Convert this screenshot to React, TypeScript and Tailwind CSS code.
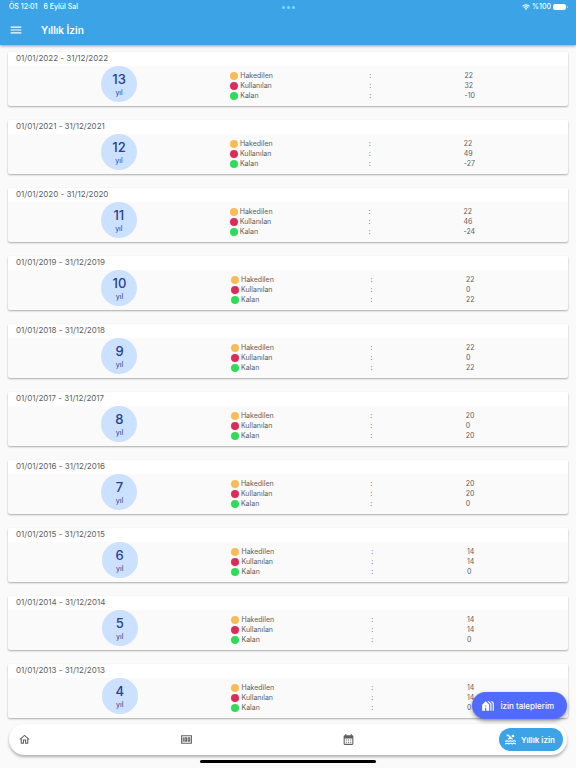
import React from "react";
import {
  MdCalendarMonth,
  MdHolidayVillage,
  MdMenu,
  MdMoney,
  MdOutlineHome,
  MdPool,
} from "react-icons/md";

type LeaveYear = {
  year: number;
  seniority: number;
  earned: number;
  used: number;
  remaining: number;
};

const leaveYears: LeaveYear[] = [
  { year: 2022, seniority: 13, earned: 22, used: 32, remaining: -10 },
  { year: 2021, seniority: 12, earned: 22, used: 49, remaining: -27 },
  { year: 2020, seniority: 11, earned: 22, used: 46, remaining: -24 },
  { year: 2019, seniority: 10, earned: 22, used: 0, remaining: 22 },
  { year: 2018, seniority: 9, earned: 22, used: 0, remaining: 22 },
  { year: 2017, seniority: 8, earned: 20, used: 0, remaining: 20 },
  { year: 2016, seniority: 7, earned: 20, used: 20, remaining: 0 },
  { year: 2015, seniority: 6, earned: 14, used: 14, remaining: 0 },
  { year: 2014, seniority: 5, earned: 14, used: 14, remaining: 0 },
  { year: 2013, seniority: 4, earned: 14, used: 14, remaining: 0 },
];

const legend = [
  { label: "Hakedilen", dot: "bg-[#f8bb55]" },
  { label: "Kullanılan", dot: "bg-[#de2c58]" },
  { label: "Kalan", dot: "bg-[#2edc59]" },
];

function WifiIcon() {
  return (
    <svg viewBox="0 0 16 12" className="h-[6px] w-2" aria-hidden="true">
      <g fill="none" stroke="currentColor" strokeWidth="2.2">
        <path d="M1 4.6a10 10 0 0 1 14 0" />
        <path d="M3.6 7.4a6.2 6.2 0 0 1 8.8 0" />
      </g>
      <path fill="currentColor" d="M5.6 9.3a3.4 3.4 0 0 1 4.8 0L8 12z" />
    </svg>
  );
}

function StatusBar() {
  return (
    <div className="flex h-[14px] items-center justify-between pl-[9px] pr-2 text-[7px] font-medium">
      <div className="flex flex-1 gap-[6px]">
        <span>ÖS 12:01</span>
        <span>6 Eylül Sal</span>
      </div>
      <div className="flex gap-[2px]">
        <span className="size-[3px] rounded-full bg-[#7fdcff]" />
        <span className="size-[3px] rounded-full bg-[#7fdcff]" />
        <span className="size-[3px] rounded-full bg-[#7fdcff]" />
      </div>
      <div className="flex flex-1 items-center justify-end gap-[2px]">
        <WifiIcon />
        <span>%100</span>
        <span className="flex items-center gap-px">
          <span className="h-[6px] w-[13px] rounded-[2px] border border-white/50 bg-white" />
          <span className="h-[2px] w-px bg-white/50" />
        </span>
      </div>
    </div>
  );
}

function LeaveCard({ item }: { item: LeaveYear }) {
  return (
    <article className="rounded-[2px] bg-[#fafafa] shadow-[0_1px_2px_rgba(0,0,0,0.32)]">
      <h2 className="h-[14px] rounded-t-[2px] bg-white pl-2 text-[8px] leading-[12px] text-[#606060]">
        01/01/{item.year} - 31/12/{item.year}
      </h2>
      <div className="flex h-10 items-center justify-evenly text-[7px] leading-[10px] text-[#606060]">
        <div className="flex size-9 flex-col items-center self-start rounded-full bg-[#cce0ff] pt-[5px] text-[#27408f]">
          <span className="text-[13px] font-medium leading-[16px]">
            {item.seniority}
          </span>
          <span className="leading-[12px]">yıl</span>
        </div>
        <ul className="w-[46px]">
          {legend.map(({ label, dot }) => (
            <li key={label} className="flex items-center gap-[2px]">
              <span className={`size-2 shrink-0 rounded-full ${dot}`} />
              {label}
            </li>
          ))}
        </ul>
        <ul>
          {legend.map(({ label }) => (
            <li key={label}>:</li>
          ))}
        </ul>
        <ul>
          <li>{item.earned}</li>
          <li>{item.used}</li>
          <li>{item.remaining}</li>
        </ul>
      </div>
    </article>
  );
}

export default function App() {
  return (
    <div className="flex min-h-screen flex-col bg-[#fafafa] font-['Inter','Open_Sans',sans-serif]">
      <header className="h-[45px] bg-[#3ba3e6] text-white shadow-[0_1px_3px_rgba(0,0,0,0.4)]">
        <StatusBar />
        <div className="flex h-[31px] items-center gap-[18px] pl-[9px]">
          <button type="button" aria-label="Menü">
            <MdMenu className="size-[14px]" />
          </button>
          <h1 className="text-[10px] font-semibold leading-4">Yıllık İzin</h1>
        </div>
      </header>

      <main className="flex flex-col gap-[14px] px-2 pt-[7px]">
        {leaveYears.map((item) => (
          <LeaveCard key={item.year} item={item} />
        ))}
      </main>

      <footer className="relative px-[9px] pb-[5px] pt-[6px]">
        <button
          type="button"
          className="absolute -top-[26px] right-[9px] flex h-[27px] items-center gap-[5px] rounded-full bg-[#526bff] pl-[9px] pr-[13px] text-[8px] font-medium text-white shadow-[0_2px_4px_rgba(0,0,0,0.4)]"
        >
          <MdHolidayVillage className="size-[14px]" />
          İzin taleplerim
        </button>
        <nav className="flex h-[31px] items-center justify-between rounded-full bg-white px-1 text-[#616161] shadow-[0_2px_3px_rgba(0,0,0,0.3)]">
          <a href="#" aria-label="Ana sayfa" className="p-[5px]">
            <MdOutlineHome className="size-[13px]" />
          </a>
          <a href="#" aria-label="Bordro" className="p-[5px]">
            <MdMoney className="size-[13px]" />
          </a>
          <a href="#" aria-label="Takvim" className="p-[5px]">
            <MdCalendarMonth className="size-[13px]" />
          </a>
          <a
            href="#"
            className="flex h-[23px] items-center gap-1 rounded-full bg-[#3ba3e6] pl-[5px] pr-2 text-[8px] font-semibold text-white"
          >
            <MdPool className="size-[13px]" />
            Yıllık izin
          </a>
        </nav>
        <div className="mx-auto mt-[5px] h-[3px] w-44 rounded-full bg-black" />
      </footer>
    </div>
  );
}
